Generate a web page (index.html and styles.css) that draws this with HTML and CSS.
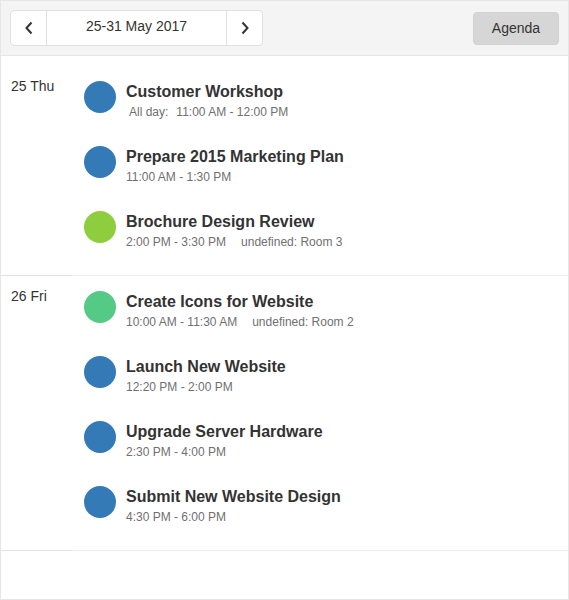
FILE: index.html
```html
<!DOCTYPE html>
<html>
<head>
<meta charset="utf-8">
<link rel="stylesheet" href="styles.css">
</head>
<body>
<div class="scheduler">
  <div class="toolbar">
    <div class="nav-group">
      <button class="nav-btn" aria-label="Previous">
        <svg width="10" height="14" viewBox="0 0 10 14"><path d="M7.5 1.5 L2.5 7 L7.5 12.5" fill="none" stroke="#333" stroke-width="2"/></svg>
      </button>
      <div class="nav-date">25-31 May 2017</div>
      <button class="nav-btn" aria-label="Next">
        <svg width="10" height="14" viewBox="0 0 10 14"><path d="M2.5 1.5 L7.5 7 L2.5 12.5" fill="none" stroke="#333" stroke-width="2"/></svg>
      </button>
    </div>
    <button class="view-btn">Agenda</button>
  </div>
  <div class="agenda">
    <div class="day">
      <div class="day-label">25 Thu</div>
      <div class="events">
        <div class="event">
          <span class="dot blue"></span>
          <div class="info">
            <div class="title">Customer Workshop</div>
            <div class="time"><span class="allday">All day:</span>11:00 AM - 12:00 PM</div>
          </div>
        </div>
        <div class="event">
          <span class="dot blue"></span>
          <div class="info">
            <div class="title">Prepare 2015 Marketing Plan</div>
            <div class="time">11:00 AM - 1:30 PM</div>
          </div>
        </div>
        <div class="event">
          <span class="dot lime"></span>
          <div class="info">
            <div class="title">Brochure Design Review</div>
            <div class="time">2:00 PM - 3:30 PM<span class="room">undefined: Room 3</span></div>
          </div>
        </div>
      </div>
    </div>
    <div class="day">
      <div class="day-label">26 Fri</div>
      <div class="events">
        <div class="event">
          <span class="dot green"></span>
          <div class="info">
            <div class="title">Create Icons for Website</div>
            <div class="time">10:00 AM - 11:30 AM<span class="room">undefined: Room 2</span></div>
          </div>
        </div>
        <div class="event">
          <span class="dot blue"></span>
          <div class="info">
            <div class="title">Launch New Website</div>
            <div class="time">12:20 PM - 2:00 PM</div>
          </div>
        </div>
        <div class="event">
          <span class="dot blue"></span>
          <div class="info">
            <div class="title">Upgrade Server Hardware</div>
            <div class="time">2:30 PM - 4:00 PM</div>
          </div>
        </div>
        <div class="event">
          <span class="dot blue"></span>
          <div class="info">
            <div class="title">Submit New Website Design</div>
            <div class="time">4:30 PM - 6:00 PM</div>
          </div>
        </div>
      </div>
    </div>
  </div>
</div>
</body>
</html>
```

FILE: styles.css
```css
* { box-sizing: border-box; }
html, body { margin: 0; padding: 0; background: #fff; }
body { font-family: "Liberation Sans", Arial, sans-serif; color: #333; }

.scheduler {
  width: 569px;
  height: 600px;
  border: 1px solid #e6e6e6;
  display: flex;
  flex-direction: column;
}

.toolbar {
  display: flex;
  justify-content: space-between;
  align-items: center;
  padding: 9px;
  background: #f4f4f4;
  border-bottom: 1px solid #e6e6e6;
}

.nav-group {
  display: flex;
  height: 36px;
  background: #fff;
  border: 1px solid #e0e0e0;
  border-radius: 4px;
}

.nav-btn {
  width: 36px;
  padding: 0;
  margin: 0;
  border: 0;
  background: transparent;
  display: flex;
  align-items: center;
  justify-content: center;
}
.nav-btn svg { display: block; }
.nav-btn:first-child { border-right: 1px solid #e0e0e0; }
.nav-btn:last-child { border-left: 1px solid #e0e0e0; }

.nav-date {
  width: 179px;
  text-align: center;
  font-size: 14px;
  line-height: 31px;
  color: #333;
}

.view-btn {
  width: 86px;
  height: 33px;
  margin: 0;
  padding: 0;
  background: #d6d6d6;
  border: 1px solid #d2d2d2;
  border-radius: 4px;
  font-family: "Liberation Sans", Arial, sans-serif;
  font-size: 14px;
  color: #333;
}

.agenda {
  padding-top: 10px;
}

.day {
  display: flex;
}

.day-label {
  width: 71px;
  flex: none;
  padding: 10px 10px 9px;
  font-size: 14px;
  line-height: 20px;
  color: #333;
  border-bottom: 1px solid #e2e2e2;
}

.events {
  flex: 1;
  padding: 0 0 14px 12px;
  border-bottom: 1px solid #ececec;
}

.event {
  display: flex;
  gap: 10px;
  padding: 15px 0 10px;
}

.dot {
  width: 32px;
  height: 32px;
  border-radius: 50%;
  flex: none;
}
.dot.blue { background: #337ab7; }
.dot.lime { background: #8ecd3e; }
.dot.green { background: #55c986; }

.title {
  font-size: 16px;
  font-weight: bold;
  line-height: 21px;
  color: #333;
}

.time {
  margin-top: 1px;
  font-size: 12px;
  line-height: 18px;
  color: #707070;
}

.allday {
  margin-left: 3px;
  margin-right: 8px;
}

.room {
  margin-left: 15px;
}
```
